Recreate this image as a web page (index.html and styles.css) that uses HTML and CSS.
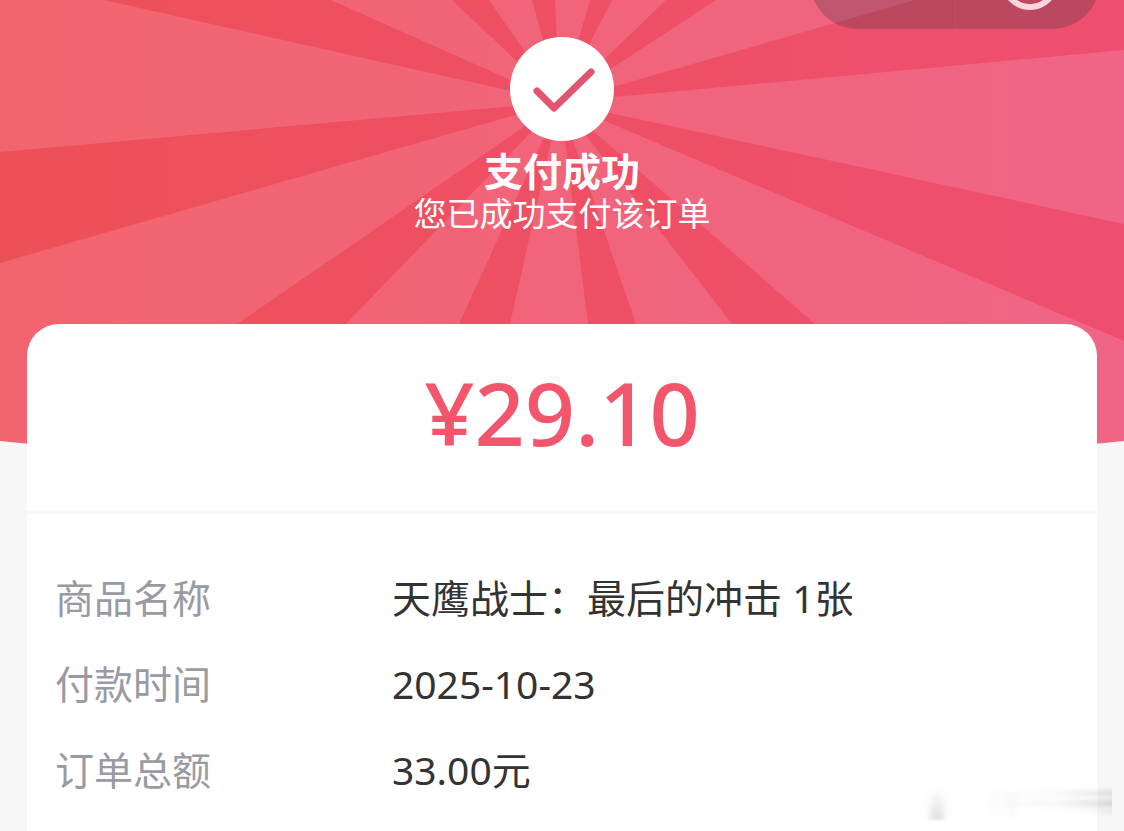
FILE: index.html
```html
<!DOCTYPE html>
<html lang="zh-CN">
<head>
  <meta charset="UTF-8">
  <meta name="viewport" content="width=device-width, initial-scale=1.0">
  <title>支付成功</title>
  <link rel="stylesheet" href="styles.css">
</head>
<body>

  <svg class="rays" viewBox="0 0 1124 480" preserveAspectRatio="none" aria-hidden="true">
    <defs>
      <linearGradient id="light" gradientUnits="userSpaceOnUse" x1="0" y1="0" x2="1124" y2="0">
        <stop offset="0" stop-color="#f2656e"/>
        <stop offset="1" stop-color="#f06487"/>
      </linearGradient>
      <linearGradient id="dark" gradientUnits="userSpaceOnUse" x1="0" y1="0" x2="1124" y2="0">
        <stop offset="0" stop-color="#ee5058"/>
        <stop offset="1" stop-color="#ee4f70"/>
      </linearGradient>
    </defs>
    <path fill="url(#light)" d="M0 0H1124V441Q562 500 0 441Z"/>
    <path fill="url(#dark)" d="M560 102L104 0H331Z
      M560 102L0 152V263Z
      M560 102L237 324H346Z
      M560 102L459 324H510Z
      M560 102L588 324H636Z
      M560 102L732 324H815Z
      M560 102L1124 224V341Z
      M560 102L1124 50V0H915Z
      M560 102L666 0H716Z
      M560 102L590 0H612Z
      M560 102L532 0H555Z
      M560 102L452 0H489Z"/>
  </svg>

  <div class="capsule">
    <button class="capsule-btn" aria-label="更多"></button>
    <button class="capsule-btn" aria-label="关闭">
      <svg width="64" height="64" viewBox="0 0 64 64">
        <circle cx="34" cy="32" r="26" fill="none" stroke="#fdd3de" stroke-width="6"/>
        <circle cx="34" cy="32" r="9" fill="#fdd3de"/>
      </svg>
    </button>
  </div>

  <header class="hero">
    <svg class="check" viewBox="0 0 104 104" aria-hidden="true">
      <circle cx="52" cy="52" r="52" fill="#fff"/>
      <path d="M27 54L44 71L81 35" fill="none" stroke="#e0566c" stroke-width="7" stroke-linecap="round" stroke-linejoin="round"/>
    </svg>
    <h1>支付成功</h1>
    <p>您已成功支付该订单</p>
  </header>

  <main class="card">
    <div class="price">¥29.10</div>
    <dl class="details">
      <dt>商品名称</dt>
      <dd>天鹰战士：最后的冲击 1张</dd>
      <dt>付款时间</dt>
      <dd>2025-10-23</dd>
      <dt>订单总额</dt>
      <dd>33.00元</dd>
    </dl>
  </main>

  <svg class="smudge" width="200" height="44" viewBox="0 0 200 44" aria-hidden="true">
    <defs>
      <filter id="soft" x="-1" width="3"><feGaussianBlur stdDeviation="4 1"/></filter>
      <filter id="softLine" y="-1" height="3"><feGaussianBlur stdDeviation="0 2"/></filter>
      <linearGradient id="fade">
        <stop offset="0" stop-color="#999" stop-opacity="0"/>
        <stop offset=".6" stop-color="#999" stop-opacity=".12"/>
        <stop offset="1" stop-color="#999" stop-opacity=".5"/>
      </linearGradient>
      <linearGradient id="fadeDown" x2="0" y2="1">
        <stop offset="0" stop-color="#888" stop-opacity="0"/>
        <stop offset="1" stop-color="#888" stop-opacity=".3"/>
      </linearGradient>
    </defs>
    <rect x="11" y="4" width="12" height="34" fill="url(#fadeDown)" filter="url(#soft)"/>
    <rect x="72" y="9" width="5" height="26" fill="#999" opacity=".06" filter="url(#soft)"/>
    <rect x="88" y="9" width="6" height="26" fill="#999" opacity=".06" filter="url(#soft)"/>
    <rect x="60" y="8" width="132" height="7" fill="url(#fade)" opacity=".5" filter="url(#softLine)"/>
    <rect x="60" y="18" width="132" height="7" fill="url(#fade)" opacity=".7" filter="url(#softLine)"/>
    <rect x="120" y="28" width="72" height="3" fill="url(#fade)" opacity=".4" filter="url(#softLine)"/>
  </svg>

</body>
</html>
```
FILE: styles.css
```css
* {
  box-sizing: border-box;
  margin: 0;
  padding: 0;
}
body {
  position: relative;
  min-height: 100vh;
  display: flex;
  flex-direction: column;
  background-color: #f7f7f7;
  color: #333;
  font-family: 'Noto Sans', 'Noto Sans CJK SC', sans-serif;
  overflow: hidden;
}
.rays {
  position: absolute;
  top: 0;
  left: 0;
  width: 100%;
  height: 480px;
}
.capsule {
  position: absolute;
  top: -67px;
  right: 24px;
  width: 290px;
  height: 96px;
  display: flex;
  border-radius: 48px;
  background-color: rgba(60, 50, 60, 0.28);
}
.capsule-btn {
  flex: 1;
  display: flex;
  align-items: center;
  justify-content: center;
  border: none;
  background: none;
}
.capsule-btn + .capsule-btn {
  border-left: 1px solid rgba(255, 255, 255, 0.05);
}
.hero {
  position: relative;
  height: 324px;
  padding-top: 37px;
  display: flex;
  flex-direction: column;
  align-items: center;
  color: #fff;
  font-family: 'Liberation Sans', 'Noto Sans CJK SC', sans-serif;
}
.check {
  width: 104px;
  height: 104px;
}
.hero h1 {
  margin-top: 10px;
  font-size: 39px;
  line-height: 44px;
}
.hero p {
  font-size: 33px;
  line-height: 40px;
}
.card {
  position: relative;
  flex: 1;
  margin: 0 27px;
  background-color: #fff;
  border-radius: 32px 32px 0 0;
}
.price {
  padding: 28px 0 39px;
  border-bottom: 3px solid #f8f8f8;
  color: #f2556c;
  font-size: 88px;
  font-weight: 500;
  line-height: 120px;
  text-align: center;
}
.details {
  display: grid;
  grid-template-columns: 337px 1fr;
  row-gap: 30px;
  padding: 56px 28px 24px;
  font-size: 39px;
  line-height: 56px;
}
.details dt {
  color: #9a9aa4;
}
.smudge {
  position: absolute;
  right: 4px;
  bottom: 5px;
}
```
